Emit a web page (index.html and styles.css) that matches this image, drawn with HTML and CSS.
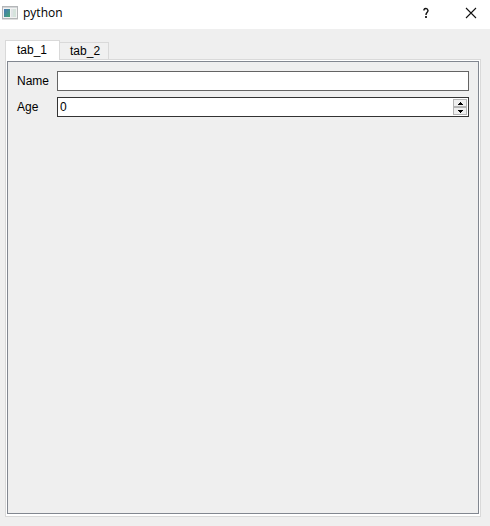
FILE: index.html
```html
<!DOCTYPE html>
<html lang="en">
<head>
<meta charset="utf-8">
<title>python</title>
<link rel="stylesheet" href="styles.css">
</head>
<body>
<header class="titlebar">
  <svg class="app-icon" width="16" height="14" viewBox="0 0 16 14" aria-hidden="true">
    <defs>
      <linearGradient id="screen" x1="0" y1="0" x2="1" y2="1">
        <stop offset="0" stop-color="#4777b8"/>
        <stop offset="1" stop-color="#43a672"/>
      </linearGradient>
    </defs>
    <rect x="0.5" y="0.5" width="15" height="12" fill="#f2f2f2" stroke="#b4b6b8"/>
    <rect x="1" y="1" width="14" height="1" fill="#d3d6d8"/>
    <rect x="2" y="3" width="6" height="8" fill="url(#screen)"/>
    <rect x="9" y="3" width="2" height="8" fill="#dfe3e6"/>
    <rect x="11" y="3" width="3" height="8" fill="#d5e3dc"/>
    <rect x="0" y="13" width="16" height="1" fill="#dedede"/>
  </svg>
  <h1 class="title">python</h1>
  <button class="caption-button" type="button" aria-label="Help">
    <svg width="12" height="12" viewBox="0 0 12 12" aria-hidden="true">
      <path d="M4 3.5V2.5Q4.5 1.5 6 1.5T8 3.5Q8 4.5 7 5.5T6 8" fill="none" stroke="#111" stroke-width="1.4"/>
      <rect x="5" y="9" width="2" height="2" fill="#333"/>
    </svg>
  </button>
  <button class="caption-button" type="button" aria-label="Close">
    <svg width="12" height="12" viewBox="0 0 12 12" aria-hidden="true">
      <path d="M1 1L11 11M11 1L1 11" fill="none" stroke="#111" stroke-width="1.1"/>
    </svg>
  </button>
</header>
<main class="content">
  <div class="tabs" role="tablist">
    <button class="tab tab-active" type="button" role="tab" id="tab-1" aria-selected="true" aria-controls="panel">tab_1</button>
    <button class="tab" type="button" role="tab" aria-selected="false">tab_2</button>
  </div>
  <div class="frame">
    <form class="panel" id="panel" role="tabpanel" aria-labelledby="tab-1">
      <label for="name">Name</label>
      <input class="field" id="name" type="text">
      <label for="age">Age</label>
      <div class="field spinbox">
        <input class="spin-value" id="age" type="text" inputmode="numeric" value="0">
        <div class="spin-buttons">
          <button class="spin-button" type="button" aria-label="Increase">
            <svg width="5" height="3" viewBox="0 0 5 3" aria-hidden="true"><path d="M0 3V2H1V1H2V0H3V1H4V2H5V3Z"/></svg>
          </button>
          <button class="spin-button" type="button" aria-label="Decrease">
            <svg width="5" height="3" viewBox="0 0 5 3" aria-hidden="true"><path d="M0 0V1H1V2H2V3H3V2H4V1H5V0Z"/></svg>
          </button>
        </div>
      </div>
    </form>
  </div>
</main>
</body>
</html>
```
FILE: styles.css
```css
* {
  box-sizing: border-box;
}

body {
  display: flex;
  flex-direction: column;
  min-height: 100vh;
  margin: 0;
  background: #efefef;
  color: #000;
  font: 12px/16px "Liberation Sans", Arial, sans-serif;
}

button,
input {
  margin: 0;
  padding: 0;
  border: 0;
  border-radius: 0;
  color: inherit;
  font: inherit;
}

svg {
  display: block;
}

.titlebar {
  display: flex;
  align-items: center;
  height: 29px;
  padding: 0 0 3px 2px;
  background: #fff;
}

.title {
  flex: 1;
  margin: 0 0 0 5px;
  font: 12px/16px "Open Sans", "Noto Sans", sans-serif;
}

.caption-button {
  display: grid;
  place-items: center;
  width: 45px;
  height: 26px;
  background: transparent;
}

.caption-button:last-child {
  width: 38px;
  margin-left: 4px;
}

.content {
  display: flex;
  flex: 1;
  flex-direction: column;
  padding: 11px 9px 9px 5px;
}

.tabs {
  display: flex;
  align-items: flex-end;
}

.tab {
  height: 17px;
  padding: 0 8px 0 10px;
  border: 1px solid #d9d9d9;
  border-width: 1px 1px 0 0;
  background: #f0f0f0;
}

.tab-active {
  z-index: 1;
  height: 20px;
  margin-bottom: -1px;
  padding: 0 12px 2px 11px;
  border-left-width: 1px;
  background: #fff;
}

.frame {
  display: flex;
  flex: 1;
  padding: 1px 1px 2px;
  border: 1px solid #d9d9d9;
  background: #fff;
}

.panel {
  display: grid;
  flex: 1;
  grid-template-columns: 34px 1fr;
  grid-auto-rows: 20px;
  gap: 6px;
  align-items: center;
  padding: 9px;
  border: 1px solid #828790;
  background: #efefef;
}

.field {
  width: 100%;
  height: 20px;
  padding: 0 2px;
  border: 1px solid #646464;
  background: #fff;
}

.spinbox {
  display: flex;
  align-items: center;
  padding: 1px 1px 1px 2px;
  border-color: #333;
}

.spin-value {
  flex: 1;
  min-width: 0;
  background: transparent;
  outline: 0;
}

.spin-buttons {
  display: grid;
  grid-template-rows: 1fr 1fr;
  width: 14px;
  height: 16px;
}

.spin-button {
  display: grid;
  place-items: center;
  border: 1px solid #b4b4b4;
  background: #efefef;
}
```
